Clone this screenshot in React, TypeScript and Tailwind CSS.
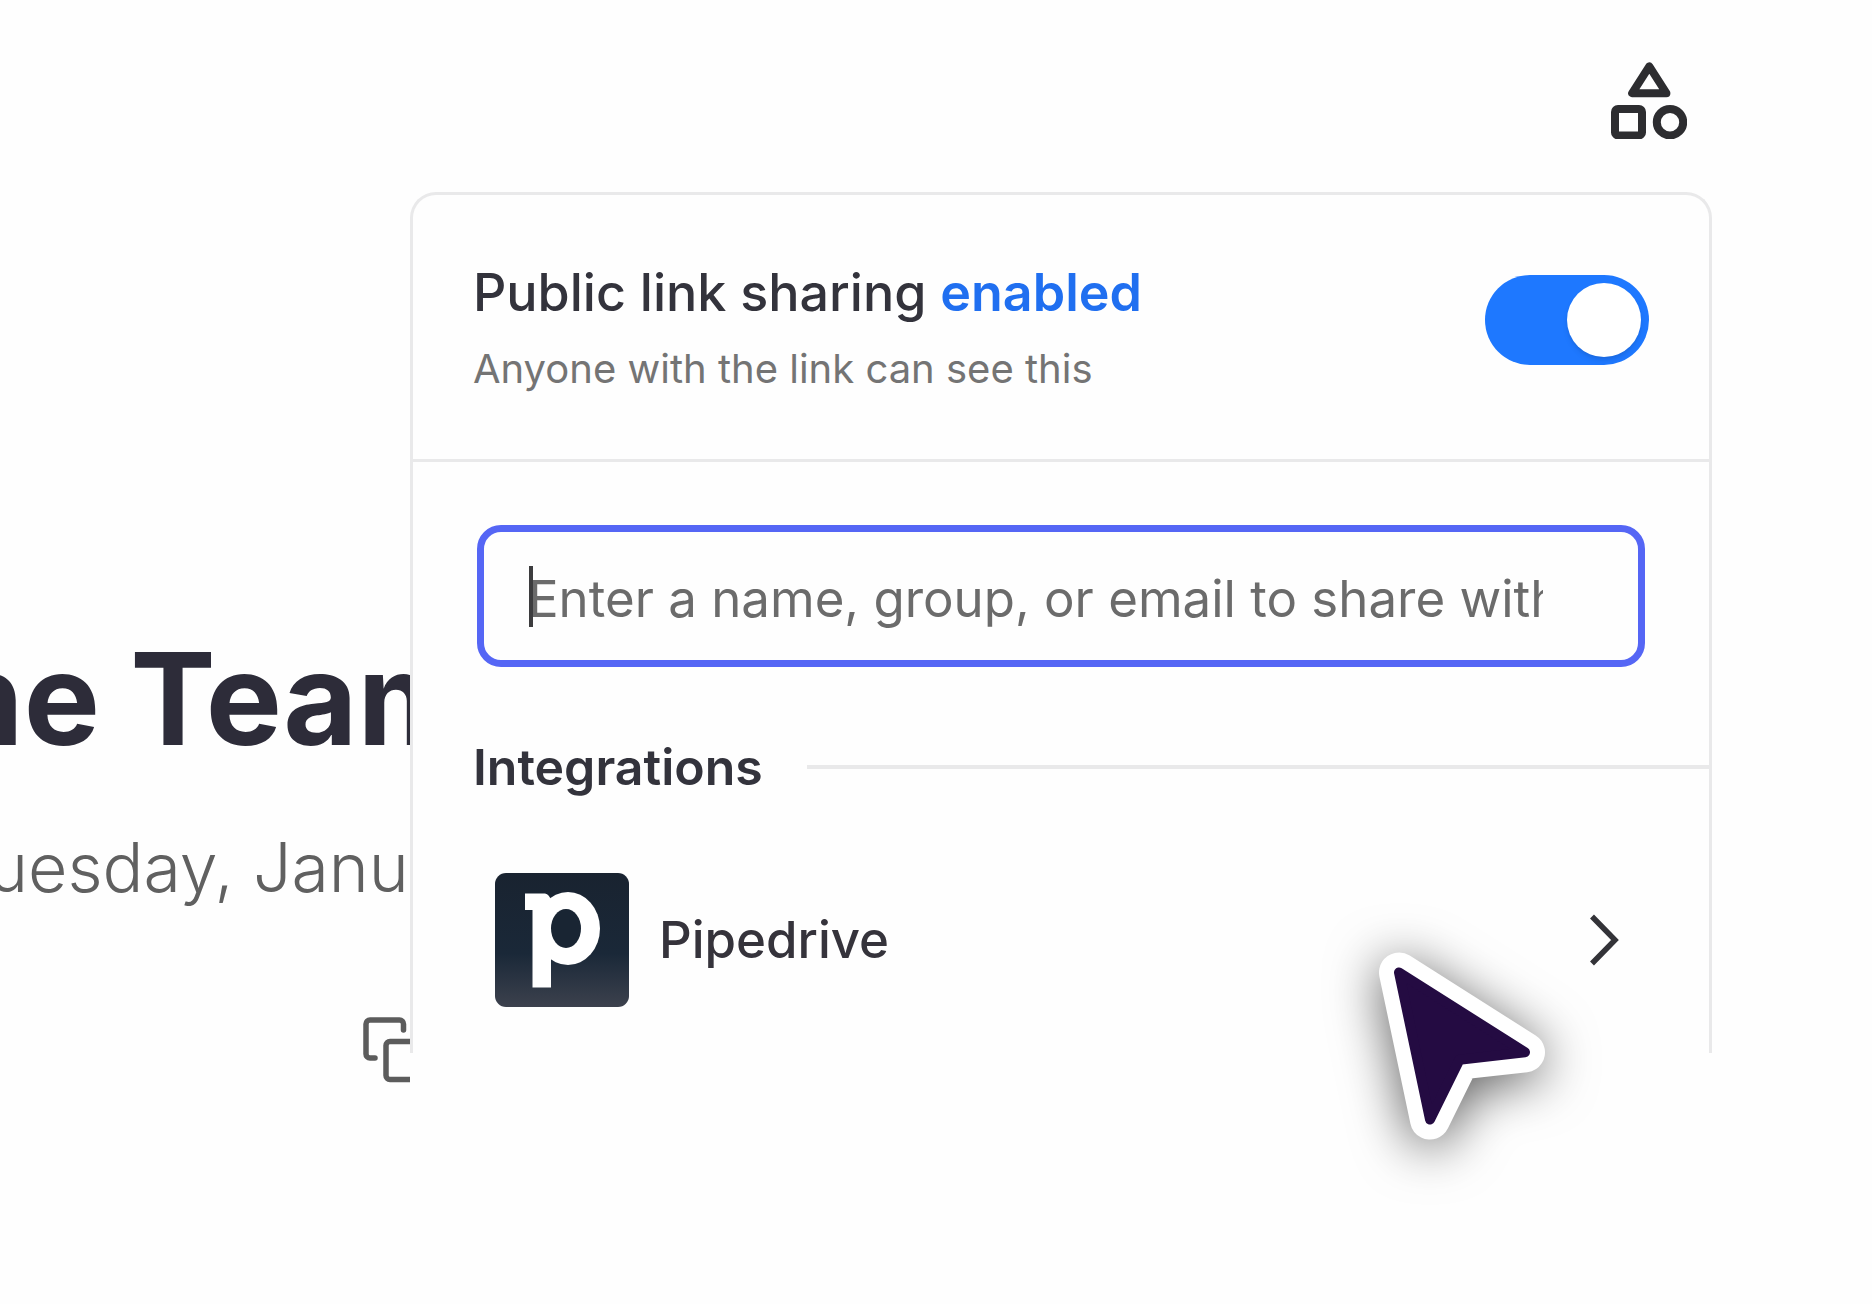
import React from "react";

function ShapesIcon() {
  return (
    <svg width="76" height="77" viewBox="0 0 76 77" fill="none" stroke="#2d2d30" strokeWidth="8" strokeLinejoin="round" aria-hidden="true">
      <path d="M38.3 4.400 21.200 31.200h34.200z" />
      <rect x="4" y="47" width="27" height="26.4" rx="3" />
      <circle cx="59" cy="60.2" r="13.2" />
    </svg>
  );
}

function CopyIcon() {
  return (
    <svg width="66" height="66" viewBox="0 0 66 66" fill="none" stroke="#5c5c5c" strokeWidth="5.5" strokeLinecap="round" aria-hidden="true">
      <path d="M40.5 13V7a4 4 0 0 0-4-4H7a4 4 0 0 0-4 4v30a4 4 0 0 0 4 4h5" />
      <rect x="23" y="24.5" width="39" height="38" rx="4" />
    </svg>
  );
}

function PipedriveLogo() {
  return (
    <svg width="134" height="134" viewBox="0 0 134 134" className="shrink-0" aria-hidden="true">
      <defs>
        <linearGradient id="pd" x1="0" y1="0" x2="0" y2="1">
          <stop offset="0" stopColor="#192330" />
          <stop offset="0.6" stopColor="#1a2838" />
          <stop offset="1" stopColor="#3c414d" />
        </linearGradient>
      </defs>
      <rect width="134" height="134" rx="11" fill="url(#pd)" />
      <ellipse cx="73" cy="55.5" rx="32" ry="36.5" fill="#fff" />
      <path d="M30 20.5h20q4.500 1 6 7V114.500H37.500V37H30z" fill="#fff" />
      <ellipse cx="71" cy="55.5" rx="15" ry="19.5" fill="#192533" />
    </svg>
  );
}

function ChevronIcon() {
  return (
    <svg width="30" height="54" viewBox="0 0 30 54" fill="none" stroke="#333338" strokeWidth="5.5" aria-hidden="true">
      <path d="M3 3.500 26 27 3 50.500" />
    </svg>
  );
}

function Cursor() {
  return (
    <svg
      width="168"
      height="190"
      viewBox="0 0 168 190"
      className="pointer-events-none absolute top-[760px] right-[166px] overflow-visible drop-shadow-[0_8px_26px_rgba(0,0,0,0.62)]"
      aria-hidden="true"
    >
      <g strokeLinejoin="round">
        <path d="M21 20.5 147 100.300 81.500 107.700 52 167.500z" fill="#fff" stroke="#fff" strokeWidth="40" />
        <path d="M21 20.5 147 100.300 81.500 107.700 52 167.500z" fill="#240b42" stroke="#240b42" strokeWidth="10" />
      </g>
    </svg>
  );
}

function MeetingPage() {
  return (
    <section className="w-[21.9%] shrink-0 overflow-hidden whitespace-nowrap pt-[435px]">
      <h1 className="-ml-14 text-[128px] leading-[144px] font-bold text-[#2d2c39]">ne Team</h1>
      <p className="mt-14 -ml-3 text-[68px] leading-[80px] font-light text-[#606060]">uesday, Janu</p>
      <button type="button" aria-label="Copy" className="mt-[110px] ml-[363px] block">
        <CopyIcon />
      </button>
    </section>
  );
}

function SharePanel() {
  return (
    <section className="relative mr-40 min-w-0 flex-1">
      <div className="rounded-t-[26px] border-3 border-b-0 border-[#e9e9ea] pb-[46px]">
        <div className="flex items-start justify-between border-b-3 border-[#e9e9ea] px-[60px] pt-[66px] pb-[62px]">
          <div>
            <label htmlFor="public-link" className="block text-[52px] leading-[64px] font-medium text-[#33333c]">
              Public link sharing <span className="font-semibold text-[#206ff0]">enabled</span>
            </label>
            <p className="mt-4 text-[40px] leading-[56px] text-[#747474]">Anyone with the link can see this</p>
          </div>
          <input
            id="public-link"
            type="checkbox"
            role="switch"
            defaultChecked
            className="mt-3.5 flex h-[90px] w-[164px] shrink-0 appearance-none items-center rounded-full bg-[#c9c9cc] px-2 before:size-[74px] before:rounded-full before:bg-white before:shadow-md before:content-[''] checked:justify-end checked:bg-[#1e78ff]"
          />
        </div>

        <div className="relative mx-[64px] mt-[63px]">
          <input
            type="text"
            aria-label="Share with"
            placeholder="Enter a name, group, or email to share with"
            className="block h-[142px] w-full rounded-[24px] border-7 border-[#5566f5] bg-transparent pt-1 pr-[95px] pl-11 text-[51px] text-[#333338] outline-none placeholder:text-[#6b6b6b]"
          />
          <span className="absolute top-[41px] left-[52px] h-[61px] w-1 bg-[#3c3c3e]" />
        </div>

        <div className="mt-[70px] flex items-center gap-11 pl-[60px]">
          <h2 className="text-[50px] leading-[60px] font-semibold text-[#33333c]">Integrations</h2>
          <div className="h-1 flex-1 bg-[#e9e9ea]" />
        </div>

        <button type="button" className="mt-[76px] flex w-full items-center gap-[30px] pr-[90px] pl-[82px] text-left">
          <PipedriveLogo />
          <span className="flex-1 text-[51px] leading-[64px] font-medium text-[#35333b]">Pipedrive</span>
          <ChevronIcon />
        </button>
      </div>
      <Cursor />
    </section>
  );
}

export default function App() {
  return (
    <main className="min-h-screen overflow-hidden bg-[#fefefe] font-['Inter',sans-serif]">
      <header className="flex h-48 justify-end pt-[62px] pr-[185px]">
        <button type="button" aria-label="Share and integrations" className="self-start">
          <ShapesIcon />
        </button>
      </header>
      <div className="flex">
        <MeetingPage />
        <SharePanel />
      </div>
    </main>
  );
}
